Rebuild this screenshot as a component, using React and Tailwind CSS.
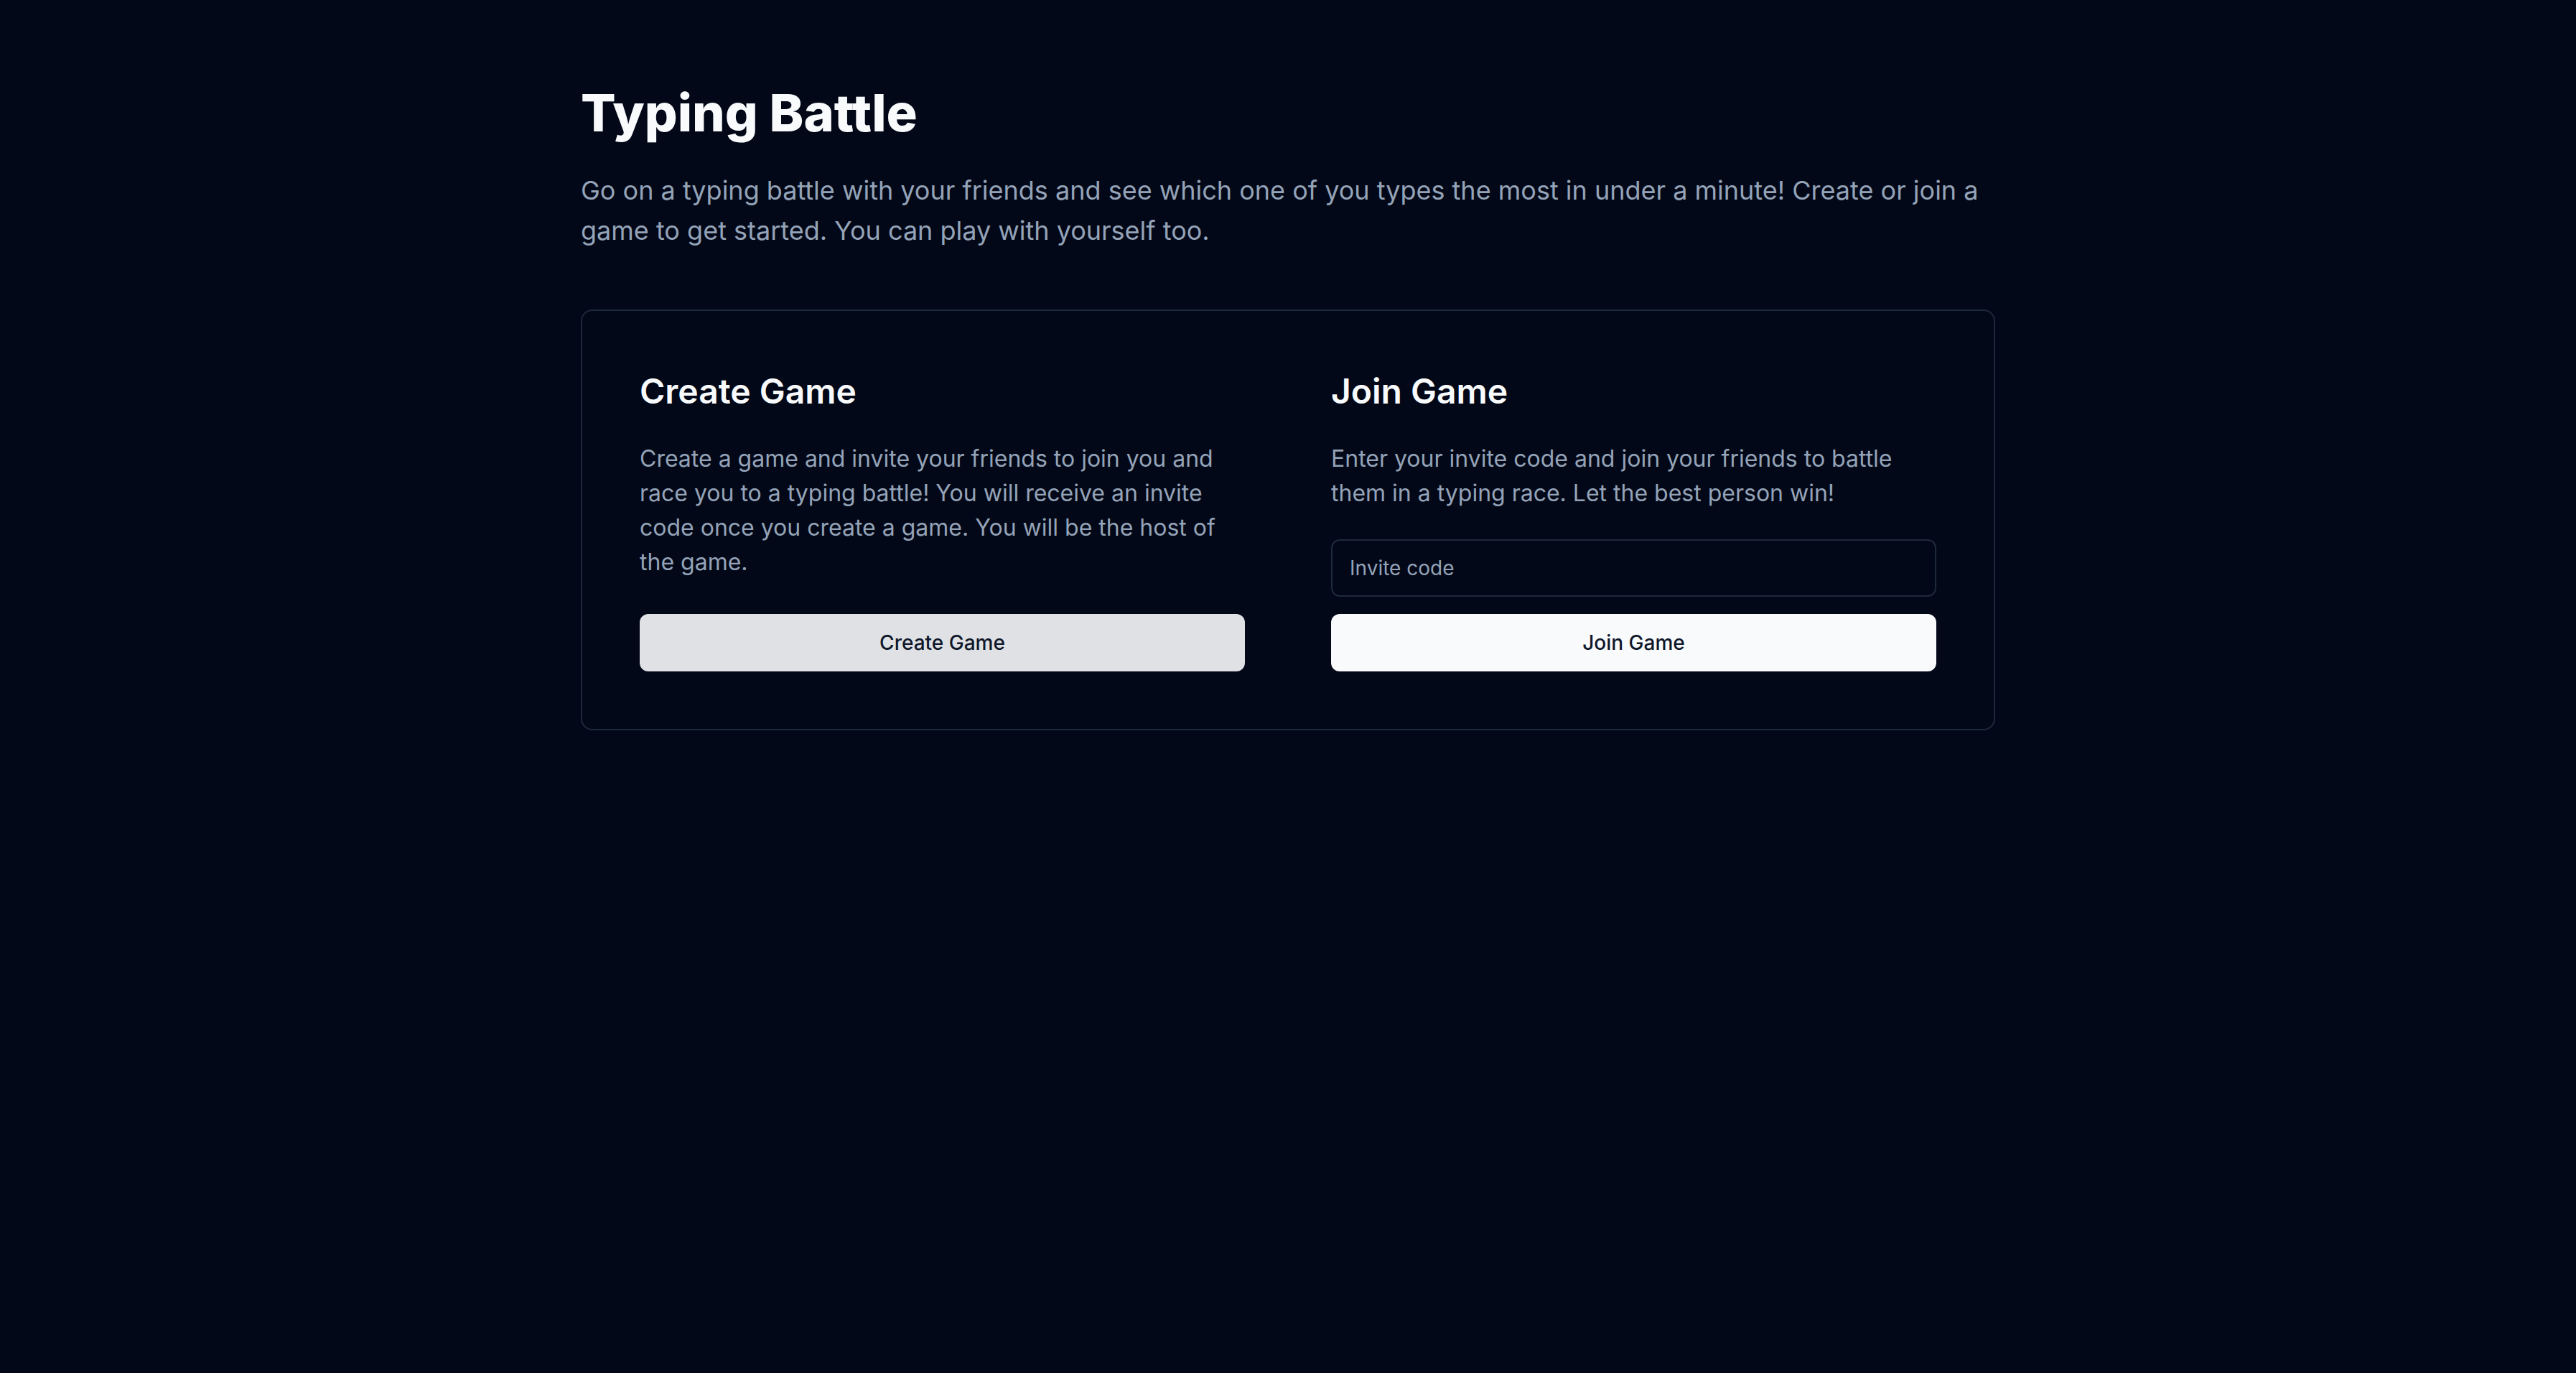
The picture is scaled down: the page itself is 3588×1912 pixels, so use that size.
export default function App() {
  return (
    <div className="min-h-screen bg-[#020817] font-['Inter','Liberation_Sans',sans-serif] text-[#f8fafc]">
      <main className="mx-auto w-[1970px] pt-[117px]">
        <h1 className="text-[72px] font-extrabold leading-[80px]">Typing Battle</h1>
        <p className="mt-[40px] text-[36px] leading-[56px] text-[#94a3b8]">
          Go on a typing battle with your friends and see which one of you types the most in under a minute! Create or
          join a game to get started. You can play with yourself too.
        </p>

        <div className="mt-[82px] rounded-[16px] border-2 border-[#1e293b] p-[80px]">
          <div className="grid grid-cols-2 gap-[120px]">
            {/* create */}
            <section className="flex flex-col">
              <h2 className="text-[48px] font-semibold leading-[64px]">Create Game</h2>
              <p className="mb-[40px] mt-[38px] text-[32px] leading-[48px] text-[#94a3b8]">
                Create a game and invite your friends to join you and race you to a typing battle! You will receive an
                invite code once you create a game. You will be the host of the game.
              </p>
              <button className="mt-auto h-[80px] w-full rounded-[12px] bg-[#f8fafc]/90 text-[28px] font-medium text-[#0f172a]">
                Create Game
              </button>
            </section>

            {/* join */}
            <section className="flex flex-col">
              <h2 className="text-[48px] font-semibold leading-[64px]">Join Game</h2>
              <p className="mb-[40px] mt-[38px] text-[32px] leading-[48px] text-[#94a3b8]">
                Enter your invite code and join your friends to battle them in a typing race. Let the best person win!
              </p>
              <input
                type="text"
                placeholder="Invite code"
                className="h-[80px] w-full rounded-[12px] border-2 border-[#1e293b] bg-transparent px-[24px] text-[28px] text-[#f8fafc] placeholder:text-[#94a3b8] outline-none"
              />
              <button className="mt-[24px] h-[80px] w-full rounded-[12px] bg-[#f8fafc] text-[28px] font-medium text-[#0f172a]">
                Join Game
              </button>
            </section>
          </div>
        </div>
      </main>
    </div>
  );
}
